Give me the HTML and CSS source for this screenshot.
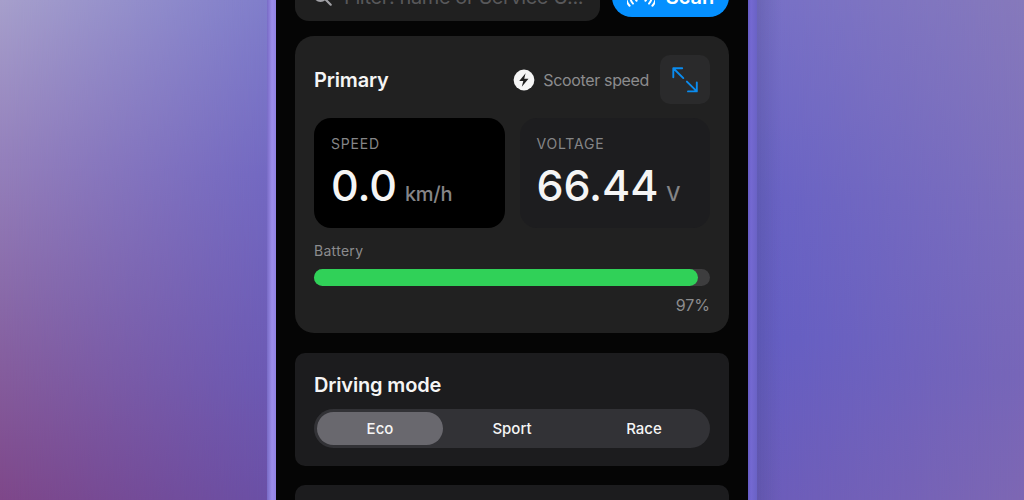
FILE: index.html
```html
<!DOCTYPE html>
<html lang="en">
<head>
    <meta charset="UTF-8">
    <meta name="viewport" content="width=device-width, initial-scale=1.0">
    <title>Scooter Dashboard</title>
    <link rel="stylesheet" href="styles.css">
</head>
<body>
    <div class="side side-left"></div>

    <div class="phone">
        <main class="screen">
            <!-- Search and scan -->
            <div class="toolbar">
                <div class="search">
                    <svg width="20" height="20" viewBox="0 0 20 20" fill="none" stroke="#a0a0a5" stroke-width="2.2" stroke-linecap="round">
                        <circle cx="7.5" cy="7.5" r="6.3"/>
                        <path d="M12.3 12.3l5.4 5.4"/>
                    </svg>
                    <span class="search-text">Filter: name or Service U...</span>
                </div>
                <button class="scan">
                    <svg width="28" height="22" viewBox="0 0 28 22" fill="none" stroke="#fff" stroke-width="2" stroke-linecap="round">
                        <circle cx="14" cy="11" r="2.2" fill="#fff" stroke="none"/>
                        <path d="M9.6 7.2a5.6 5.6 0 0 0 0 7.6M18.4 7.2a5.6 5.6 0 0 1 0 7.6"/>
                        <path d="M6 4.4a9.6 9.6 0 0 0 0 13.2M22 4.4a9.6 9.6 0 0 1 0 13.2"/>
                        <path d="M2.6 2.2a13 13 0 0 0 0 17.6M25.4 2.2a13 13 0 0 1 0 17.6"/>
                    </svg>
                    <span>Scan</span>
                </button>
            </div>

            <!-- Primary values -->
            <section class="card primary">
                <div class="card-header">
                    <h2>Primary</h2>
                    <div class="source">
                        <svg width="22" height="22" viewBox="0 0 22 22">
                            <circle cx="11" cy="11" r="10.4" fill="#f5f5f5"/>
                            <path d="M12.6 4.3L6.2 12h4.1l-1.5 5.7L15.5 9.8h-4.3z" fill="#202020"/>
                        </svg>
                        <span>Scooter speed</span>
                    </div>
                    <button class="expand">
                        <svg width="28" height="28" viewBox="0 0 28 28" fill="none" stroke="#0a8cf0" stroke-width="1.9" stroke-linecap="round" stroke-linejoin="round">
                            <path d="M11.2 2.3H2.3V11.2M2.8 2.8L12.3 12.1"/>
                            <path d="M17 25.4H25.8V16.5M15.9 15.6L25.3 24.9"/>
                        </svg>
                    </button>
                </div>
                <div class="tiles">
                    <div class="tile tile-speed">
                        <p class="tile-label">SPEED</p>
                        <div class="tile-value">
                            <span>0.0</span>
                            <span class="unit">km/h</span>
                        </div>
                    </div>
                    <div class="tile tile-voltage">
                        <p class="tile-label">VOLTAGE</p>
                        <div class="tile-value">
                            <span>66.44</span>
                            <span class="unit">V</span>
                        </div>
                    </div>
                </div>
                <p class="battery-label">Battery</p>
                <div class="bar">
                    <div class="bar-fill" style="width: 97%"></div>
                </div>
                <p class="battery-value">97%</p>
            </section>

            <!-- Driving mode -->
            <section class="card mode">
                <h2>Driving mode</h2>
                <div class="segments">
                    <button class="segment active">Eco</button>
                    <button class="segment">Sport</button>
                    <button class="segment">Race</button>
                </div>
            </section>

            <section class="card next"></section>
        </main>
    </div>

    <div class="side side-right"></div>
</body>
</html>
```
FILE: styles.css
```css
* {
    box-sizing: border-box;
}
body {
    font-family: Inter, "Liberation Sans", sans-serif;
    margin: 0;
    height: 500px;
    display: flex;
    overflow: hidden;
    background: #6f63bd;
    color: #f5f5f5;
}
h2, p {
    margin: 0;
}
button {
    border: 0;
    padding: 0;
    font-family: inherit;
    color: inherit;
}

/* Wallpaper on both sides of the phone */
.side {
    display: grid;
}
.side::before {
    content: '';
}
.side-left {
    width: 267px;
    background: linear-gradient(#807ecb, #7369c2 35%, #6c5ab4 75%, #6b50a6);
}
.side-left::before {
    background: linear-gradient(#a69fcb, #9480bb 32%, #8867a6 62%, #7e4789);
    mask-image: linear-gradient(90deg, #000, transparent);
}
.side-right {
    width: 267px;
    background: linear-gradient(90deg, rgba(70, 70, 130, 0.25), transparent 9%),
        linear-gradient(#7770c7, #6862c5 40%, #645ec4 68%, #6b5cbb);
}
.side-right::before {
    background: linear-gradient(#8679bb, #7b6dbc 45%, #7766b8 75%, #7d67b3);
    mask-image: linear-gradient(90deg, transparent, #000);
}

/* Phone */
.phone {
    width: 490px;
    padding: 0 9px;
    background: linear-gradient(90deg, #786bc5 0, #9c8dea 5px, #9182e4 9px, transparent 9px, transparent 481px, #655bc5 481px, #7469d2 484px, #6a62c5 490px);
}
.screen {
    height: 500px;
    padding: 0 19px;
    background: #050505;
    display: flex;
    flex-direction: column;
    overflow: hidden;
}

/* Toolbar */
.toolbar {
    height: 48px;
    margin-top: -27px;
    display: flex;
    align-items: center;
    gap: 12px;
    flex-shrink: 0;
}
.search {
    width: 305px;
    height: 48px;
    padding-left: 18px;
    border-radius: 14px;
    background: #202020;
    display: flex;
    align-items: center;
    gap: 11px;
}
.search-text {
    font-size: 20px;
    letter-spacing: -0.4px;
    color: #58585a;
    white-space: nowrap;
}
.scan {
    width: 117px;
    height: 40px;
    border-radius: 20px;
    background: #0590ff;
    display: flex;
    align-items: center;
    justify-content: center;
    gap: 11px;
    font-size: 20px;
    font-weight: 600;
    color: #fff;
}

/* Cards */
.card {
    flex-shrink: 0;
    padding: 19px;
    border-radius: 10px;
    background: #1c1c1e;
}
.card h2 {
    font-size: 20px;
    line-height: 24px;
    font-weight: 600;
    letter-spacing: -0.15px;
}
.primary {
    height: 297px;
    margin-top: 15px;
    border-radius: 19px;
    background: #212121;
}
.card-header {
    height: 49px;
    display: flex;
    align-items: center;
}
.source {
    margin-left: auto;
    display: flex;
    align-items: center;
    gap: 8px;
    font-size: 16px;
    letter-spacing: -0.35px;
    color: #8c8c8e;
}
.expand {
    width: 50px;
    height: 49px;
    margin-left: 11px;
    border-radius: 10px;
    background: #2a2a2b;
    display: flex;
    align-items: center;
    justify-content: center;
}

/* Tiles */
.tiles {
    margin-top: 14px;
    display: grid;
    grid-template-columns: 1fr 1fr;
    gap: 15px;
}
.tile {
    height: 110px;
    padding: 17px;
    border-radius: 17px;
}
.tile-speed {
    background: #000;
}
.tile-voltage {
    background: #1d1d1f;
}
.tile-label {
    font-size: 14px;
    line-height: 18px;
    letter-spacing: 0.8px;
    color: #858587;
}
.tile-value {
    margin-top: 5px;
    display: flex;
    align-items: baseline;
    gap: 8px;
    font-size: 43px;
    line-height: 54px;
    font-weight: 550;
    letter-spacing: -0.1px;
}
.unit {
    font-size: 20px;
    line-height: 24px;
    font-weight: 500;
    letter-spacing: -0.3px;
    color: #858587;
}

/* Battery */
.battery-label {
    margin-top: 14px;
    font-size: 14px;
    line-height: 18px;
    letter-spacing: 0.3px;
    color: #8c8c8e;
}
.bar {
    height: 17px;
    margin-top: 9px;
    border-radius: 9px;
    background: #3d3d3e;
}
.bar-fill {
    height: 17px;
    border-radius: 9px;
    background: #30d158;
}
.battery-value {
    margin-top: 9px;
    font-size: 16px;
    line-height: 20px;
    text-align: right;
    color: #8c8c8e;
}

/* Driving mode */
.mode {
    height: 113px;
    margin-top: 20px;
}
.mode h2 {
    margin-top: 1px;
}
.segments {
    height: 39px;
    margin-top: 12px;
    padding: 3px;
    border-radius: 20px;
    background: #323236;
    display: flex;
    gap: 6px;
}
.segment {
    flex: 1;
    border-radius: 17px;
    background: none;
    font-size: 15px;
    font-weight: 500;
}
.segment.active {
    background: #69686e;
}
.next {
    height: 60px;
    margin-top: 19px;
}
```
